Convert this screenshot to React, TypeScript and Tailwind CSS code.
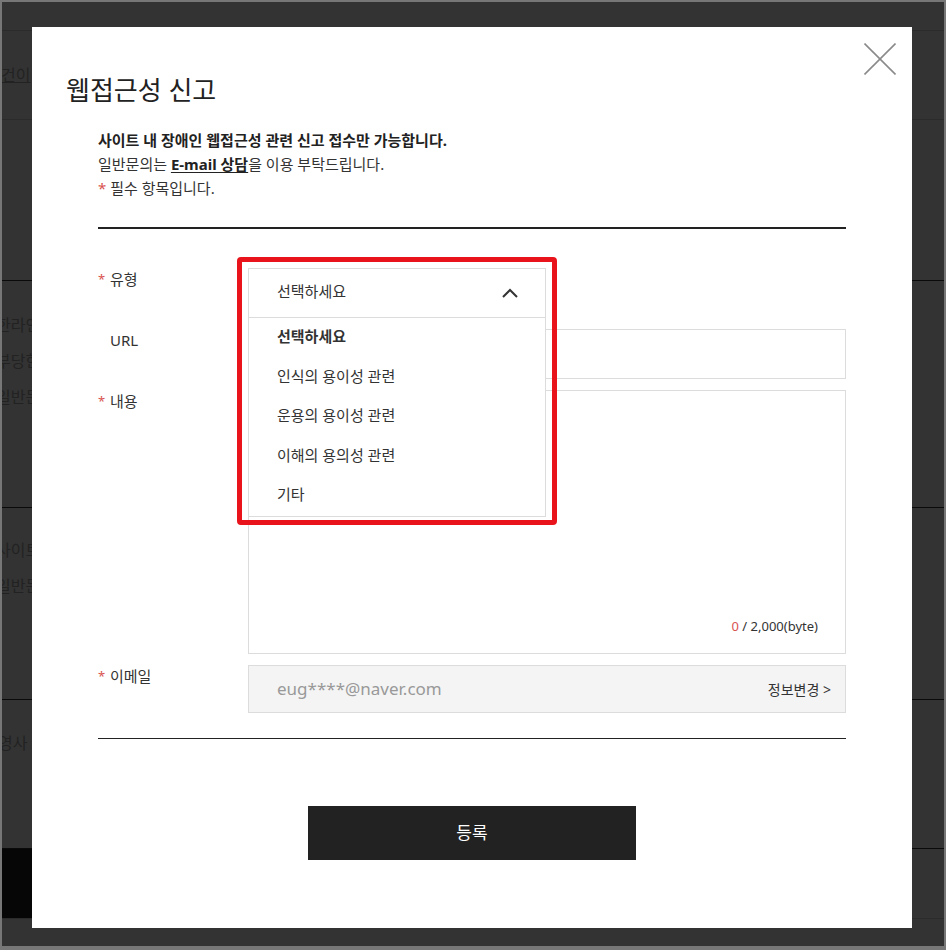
import React from "react"

const options = ["선택하세요", "인식의 용이성 관련", "운용의 용이성 관련", "이해의 용의성 관련", "기타"]

function Label({ text, required }: { text: string; required?: boolean }) {
  return (
    <div className="flex w-[150px] shrink-0 items-start text-[15px] leading-[22px] text-[#333]">
      <span className="w-[12px] text-[13px] text-[#d9534f]">{required ? "*" : ""}</span>
      <span>{text}</span>
    </div>
  )
}

function Backdrop() {
  return (
    <div className="flex h-full flex-col text-[16px] text-[#222]">
      <div className="h-[29px] shrink-0 border-b border-[#2b2b2b]" />
      <div className="flex h-[89px] shrink-0 items-center border-b border-[#2b2b2b]">
        <span className="-ml-[1px] underline decoration-[#222]">건이</span>
      </div>
      <div className="h-[161px] shrink-0 border-b border-[#0a0a0a]" />
      <div className="flex h-[227px] shrink-0 flex-col gap-[12px] border-b border-[#0a0a0a] pt-[32px]">
        <span className="-ml-[6px] leading-[24px]">한라인</span>
        <span className="-ml-[6px] leading-[24px]">부당한</span>
        <span className="-ml-[6px] leading-[24px]">일반문</span>
      </div>
      <div className="flex h-[192px] shrink-0 flex-col gap-[12px] border-b border-[#0a0a0a] pt-[30px]">
        <span className="-ml-[6px] leading-[24px]">사이트</span>
        <span className="-ml-[6px] leading-[24px]">일반문</span>
      </div>
      <div className="h-[148px] shrink-0 pt-[31px]">
        <span className="-ml-[4px] leading-[24px]">영사</span>
      </div>
      <div className="h-[71px] shrink-0 border-t border-b border-t-[#0a0a0a] border-b-[#2b2b2b]">
        <div className="h-full w-[400px] bg-[#060606]" />
      </div>
    </div>
  )
}

export default function App() {
  return (
    <div className="relative h-[950px] w-[946px] overflow-hidden border-2 border-b-[4px] border-[#777] bg-[#333] font-['Noto_Sans','Noto_Sans_CJK_KR',sans-serif]">
      <Backdrop />

      {/* Modal */}
      <div className="absolute left-[30px] top-[25px] h-[901px] w-[880px] bg-white pt-[47px]">
        <button className="absolute right-4 top-4 h-8 w-8" aria-label="닫기">
          <svg viewBox="0 0 32 32" className="h-8 w-8">
            <line x1="0.5" y1="0.5" x2="31.5" y2="31.5" stroke="#8a8a8a" strokeWidth="1.6" />
            <line x1="31.5" y1="0.5" x2="0.5" y2="31.5" stroke="#8a8a8a" strokeWidth="1.6" />
          </svg>
        </button>

        <h1 className="pl-[34px] text-[26px] font-normal leading-[32px] text-[#222]">웹접근성 신고</h1>

        <div className="px-[66px]">
          <div className="mt-[22px] text-[15px] leading-[24px] text-[#333]">
            <p className="font-bold text-[#222]">사이트 내 장애인 웹접근성 관련 신고 접수만 가능합니다.</p>
            <p>
              일반문의는 <span className="font-bold text-[#222] underline underline-offset-2">E-mail 상담</span>을 이용 부탁드립니다.
            </p>
            <p>
              <span className="text-[#d9534f]">*</span> 필수 항목입니다.
            </p>
          </div>

          <div className="mt-[27px] h-[2px] bg-[#222]" />

          <div className="flex flex-col gap-[11px] pt-[39px]">
            {/* 유형 */}
            <div className="flex">
              <Label text="유형" required />
              <div className="relative h-[50px] w-[298px]">
                <div className="absolute left-0 top-0 z-10 w-[298px] border border-[#dcdcdc] bg-white">
                  <div className="flex h-[49px] items-center justify-between border-b border-[#dcdcdc] pl-[28px] pr-[27px] text-[15px] text-[#333]">
                    <span className="-mt-[3px]">선택하세요</span>
                    <svg width="16" height="10" viewBox="0 0 16 10">
                      <polyline points="1,9 8,2 15,9" fill="none" stroke="#333" strokeWidth="2" />
                    </svg>
                  </div>
                  <ul>
                    {options.map((o, i) => (
                      <li
                        key={o}
                        className={`flex h-[39.5px] items-center pb-[3px] pl-[28px] text-[15px] text-[#333] ${i === 0 ? "font-bold text-[#222]" : ""}`}
                      >
                        {o}
                      </li>
                    ))}
                  </ul>
                </div>
                <div className="pointer-events-none absolute -left-[11px] -top-[11px] z-20 h-[268px] w-[320px] rounded-[4px] border-[5px] border-[#e8131b]" />
              </div>
            </div>

            {/* URL */}
            <div className="flex">
              <Label text="URL" />
              <div className="h-[50px] flex-1 border border-[#dcdcdc]" />
            </div>

            {/* 내용 */}
            <div className="flex">
              <Label text="내용" required />
              <div className="flex h-[264px] flex-1 flex-col items-end justify-end border border-[#dcdcdc] pb-[18px] pr-[27px]">
                <span className="text-[13px] leading-[18px] text-[#333]">
                  <span className="text-[#d9534f]">0</span> / 2,000(byte)
                </span>
              </div>
            </div>

            {/* 이메일 */}
            <div className="flex">
              <Label text="이메일" required />
              <div className="flex h-[48px] flex-1 items-center justify-between border border-[#dcdcdc] bg-[#f4f4f4] pl-[28px] pr-[14px]">
                <span className="text-[17px] text-[#999]">eug****@naver.com</span>
                <span className="text-[14px] text-[#333]">정보변경 &gt;</span>
              </div>
            </div>
          </div>

          <div className="mt-[25px] h-px bg-[#222]" />

          <button className="mx-auto mt-[67px] flex h-[54px] w-[328px] items-center justify-center bg-[#222] text-[17px] text-white">
            등록
          </button>
        </div>
      </div>
    </div>
  )
}
